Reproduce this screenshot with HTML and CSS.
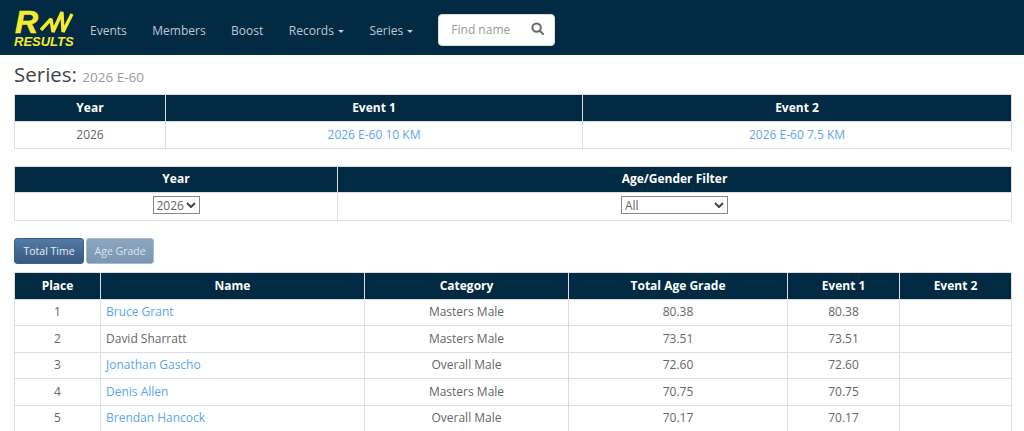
FILE: index.html
```html
<!DOCTYPE html>
<html lang="en">
<head>
    <meta charset="UTF-8">
    <meta name="viewport" content="width=device-width, initial-scale=1.0">
    <title>Series: 2026 E-60</title>
    <link rel="stylesheet" href="styles.css">
</head>
<body>
    <nav class="navbar">
        <a class="brand" href="#">
            <svg class="brand-mark" width="58" height="28" viewBox="0 0 58 28">
                <text class="brand-r" x="1" y="25">R</text>
                <polyline class="brand-w" points="27,22 37,11 39,24 48,4 49,24 58,6"></polyline>
            </svg>
            <span class="brand-text">RESULTS</span>
        </a>
        <ul class="nav-links">
            <li><a href="#">Events</a></li>
            <li><a href="#">Members</a></li>
            <li><a href="#">Boost</a></li>
            <li><a href="#">Records <span class="caret"></span></a></li>
            <li><a href="#">Series <span class="caret"></span></a></li>
        </ul>
        <form class="search">
            <input type="text" placeholder="Find name">
            <svg class="search-icon" width="14" height="14" viewBox="0 0 14 14">
                <circle cx="5.6" cy="5.6" r="4.2"></circle>
                <line x1="8.8" y1="8.8" x2="12.6" y2="12.6"></line>
            </svg>
        </form>
    </nav>

    <div class="container">
        <h1>Series: <small>2026 E-60</small></h1>

        <table class="grid events">
            <thead>
                <tr><th>Year</th><th>Event 1</th><th>Event 2</th></tr>
            </thead>
            <tbody>
                <tr><td>2026</td><td><a href="#">2026 E-60 10 KM</a></td><td><a href="#">2026 E-60 7.5 KM</a></td></tr>
            </tbody>
        </table>

        <table class="grid filters">
            <thead>
                <tr><th>Year</th><th>Age/Gender Filter</th></tr>
            </thead>
            <tbody>
                <tr>
                    <td><select class="year-select"><option>2026</option></select></td>
                    <td><select class="age-select"><option>All</option></select></td>
                </tr>
            </tbody>
        </table>

        <div class="buttons">
            <button class="btn active" type="button">Total Time</button>
            <button class="btn" type="button">Age Grade</button>
        </div>

        <table class="grid results">
            <thead>
                <tr><th>Place</th><th>Name</th><th>Category</th><th>Total Age Grade</th><th>Event 1</th><th>Event 2</th></tr>
            </thead>
            <tbody>
                <tr><td>1</td><td class="name"><a href="#">Bruce Grant</a></td><td>Masters Male</td><td>80.38</td><td>80.38</td><td></td></tr>
                <tr><td>2</td><td class="name">David Sharratt</td><td>Masters Male</td><td>73.51</td><td>73.51</td><td></td></tr>
                <tr><td>3</td><td class="name"><a href="#">Jonathan Gascho</a></td><td>Overall Male</td><td>72.60</td><td>72.60</td><td></td></tr>
                <tr><td>4</td><td class="name"><a href="#">Denis Allen</a></td><td>Masters Male</td><td>70.75</td><td>70.75</td><td></td></tr>
                <tr><td>5</td><td class="name"><a href="#">Brendan Hancock</a></td><td>Overall Male</td><td>70.17</td><td>70.17</td><td></td></tr>
            </tbody>
        </table>
    </div>
</body>
</html>
```

FILE: styles.css
```css
html, body {
    height: 431px;
    overflow: hidden;
}
body {
    margin: 0;
    font-family: 'Open Sans', sans-serif;
    font-size: 12px;
    line-height: 18px;
    color: #666;
    background-color: #fff;
}
a {
    color: #5aa5ee;
    text-decoration: none;
}
.navbar {
    display: flex;
    align-items: center;
    height: 55px;
    background-color: #022a42;
}
.brand {
    display: flex;
    flex-direction: column;
    width: 58px;
    margin-left: 14px;
    color: #f7ea2e;
}
.brand-mark {
    display: block;
    overflow: visible;
}
.brand-r {
    font-family: 'Liberation Sans', sans-serif;
    font-size: 32px;
    font-weight: bold;
    font-style: italic;
    fill: #f7ea2e;
    stroke: #f7ea2e;
    stroke-width: 0.6;
}
.brand-w {
    fill: none;
    stroke: #f7ea2e;
    stroke-width: 3.4;
    stroke-linejoin: bevel;
}
.brand-text {
    font-family: 'Liberation Sans', sans-serif;
    font-size: 13px;
    font-weight: bold;
    font-style: italic;
    line-height: 12px;
}
.nav-links {
    display: flex;
    gap: 25.5px;
    margin: 7px 0 0 18px;
    padding: 0;
    list-style: none;
}
.nav-links a {
    color: #bfc9d0;
}
.caret {
    display: inline-block;
    margin-left: 1px;
    vertical-align: middle;
    border-top: 3px solid #bfc9d0;
    border-left: 3px solid transparent;
    border-right: 3px solid transparent;
}
.search {
    display: flex;
    align-items: center;
    justify-content: space-between;
    box-sizing: border-box;
    width: 117px;
    height: 32px;
    margin: 5px 0 0 25px;
    padding: 0 9px 2px 12px;
    background-color: #fff;
    border: 1px solid #ddd;
    border-radius: 4px;
}
.search input {
    width: 70px;
    padding: 0;
    border: none;
    outline: none;
    font-family: inherit;
    font-size: 12px;
}
.search input::placeholder {
    color: #999;
}
.search-icon circle, .search-icon line {
    fill: none;
    stroke: #666;
    stroke-width: 2;
}
.container {
    padding: 0 12px 0 14px;
}
h1 {
    margin: 7px 0 4px;
    font-size: 20.5px;
    font-weight: 400;
    line-height: 25px;
    color: #444;
}
h1 small {
    font-size: 13.5px;
    color: #999;
}
.grid {
    width: 100%;
    border-collapse: collapse;
    table-layout: fixed;
    text-align: center;
}
.grid th {
    height: 27px;
    padding: 0;
    box-sizing: border-box;
    background-color: #022a42;
    color: #fff;
    font-weight: 700;
    border: 1px solid #ddd;
}
.grid td {
    height: 26.5px;
    padding: 0;
    box-sizing: border-box;
    border: 1px solid #ddd;
}
.grid .name {
    padding-left: 5px;
    text-align: left;
}
.events {
    margin-bottom: 17px;
}
.events th:nth-child(1) { width: 151px; }
.events th:nth-child(2) { width: 417px; }
.filters {
    margin-bottom: 17px;
}
.filters th {
    height: 26px;
}
.filters td {
    height: 28px;
    padding-bottom: 2px;
}
.filters th:nth-child(1) { width: 323px; }
select {
    appearance: none;
    box-sizing: border-box;
    height: 18px;
    padding: 0 0 0 3px;
    font-family: inherit;
    font-size: 12px;
    color: #666;
    background: #fff url("data:image/svg+xml,%3Csvg xmlns='http://www.w3.org/2000/svg' width='10' height='6'%3E%3Cpolyline points='1,1 5,5 9,1' fill='none' stroke='%23444' stroke-width='2'/%3E%3C/svg%3E") no-repeat right 3px center;
    border: 1px solid #888;
    vertical-align: middle;
}
.year-select {
    width: 47px;
}
.age-select {
    width: 107px;
}
.buttons {
    display: flex;
    gap: 2px;
    margin-bottom: 8px;
}
.btn {
    height: 26px;
    padding: 0 7.5px;
    font-family: inherit;
    font-size: 10.5px;
    color: #dfe6ec;
    background: linear-gradient(#8ba5bf, #7a96b2);
    border: 1px solid #a8bacb;
    border-radius: 3px;
}
.btn.active {
    padding: 0 8.5px;
    color: #e9eef3;
    background: linear-gradient(#537ba6, #36597f);
    border-color: #3d6288;
}
.results th:nth-child(1) { width: 86px; }
.results th:nth-child(2) { width: 264px; }
.results th:nth-child(3) { width: 204px; }
.results th:nth-child(4) { width: 219px; }
.results th:nth-child(5) { width: 112px; }
```
